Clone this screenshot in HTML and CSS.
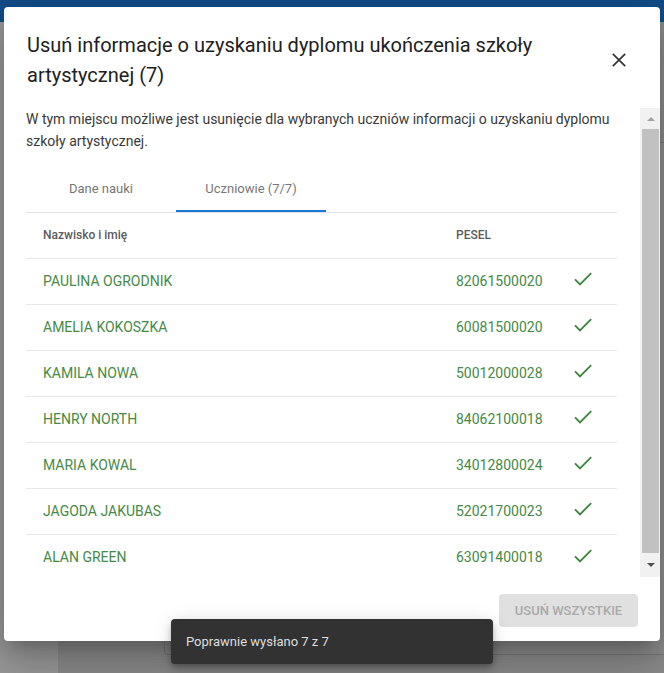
FILE: index.html
```html
<!DOCTYPE html>
<html lang="pl">
<head>
<meta charset="utf-8">
<title>Usuń informacje</title>
<link rel="stylesheet" href="styles.css">
</head>
<body>
<div class="page">
  <div class="topbar"></div>
  <div class="page-main">
    <div class="side"></div>
    <div class="content-bg">
      <div class="bg-card"></div>
    </div>
  </div>
</div>

<div class="dialog">
  <div class="dialog-header">
    <h2 class="dialog-title">Usuń informacje o uzyskaniu dyplomu ukończenia szkoły artystycznej (7)</h2>
    <button class="close-btn" aria-label="Zamknij">
      <svg viewBox="0 0 24 24" width="24" height="24"><path d="M5.8 5.8L18.2 18.2M18.2 5.8L5.8 18.2" stroke="#333" stroke-width="1.7" fill="none"/></svg>
    </button>
  </div>
  <div class="dialog-content">
    <div class="scroll-inner">
      <p class="desc">W tym miejscu możliwe jest usunięcie dla wybranych uczniów informacji o uzyskaniu dyplomu szkoły artystycznej.</p>
      <div class="tabs">
        <div class="tab">Dane nauki</div>
        <div class="tab tab-active">Uczniowie (7/7)</div>
      </div>
      <div class="table">
        <div class="row head">
          <div class="cell">Nazwisko i imię</div>
          <div class="cell">PESEL</div>
          <div class="cell"></div>
        </div>
        <div class="row">
          <div class="cell">PAULINA OGRODNIK</div>
          <div class="cell">82061500020</div>
          <div class="cell"><svg class="check" viewBox="0 0 24 24" width="24" height="24"><polyline points="4,12.3 9,17.3 20.2,6.1" /></svg></div>
        </div>
        <div class="row">
          <div class="cell">AMELIA KOKOSZKA</div>
          <div class="cell">60081500020</div>
          <div class="cell"><svg class="check" viewBox="0 0 24 24" width="24" height="24"><polyline points="4,12.3 9,17.3 20.2,6.1" /></svg></div>
        </div>
        <div class="row">
          <div class="cell">KAMILA NOWA</div>
          <div class="cell">50012000028</div>
          <div class="cell"><svg class="check" viewBox="0 0 24 24" width="24" height="24"><polyline points="4,12.3 9,17.3 20.2,6.1" /></svg></div>
        </div>
        <div class="row">
          <div class="cell">HENRY NORTH</div>
          <div class="cell">84062100018</div>
          <div class="cell"><svg class="check" viewBox="0 0 24 24" width="24" height="24"><polyline points="4,12.3 9,17.3 20.2,6.1" /></svg></div>
        </div>
        <div class="row">
          <div class="cell">MARIA KOWAL</div>
          <div class="cell">34012800024</div>
          <div class="cell"><svg class="check" viewBox="0 0 24 24" width="24" height="24"><polyline points="4,12.3 9,17.3 20.2,6.1" /></svg></div>
        </div>
        <div class="row">
          <div class="cell">JAGODA JAKUBAS</div>
          <div class="cell">52021700023</div>
          <div class="cell"><svg class="check" viewBox="0 0 24 24" width="24" height="24"><polyline points="4,12.3 9,17.3 20.2,6.1" /></svg></div>
        </div>
        <div class="row last">
          <div class="cell">ALAN GREEN</div>
          <div class="cell">63091400018</div>
          <div class="cell"><svg class="check" viewBox="0 0 24 24" width="24" height="24"><polyline points="4,12.3 9,17.3 20.2,6.1" /></svg></div>
        </div>
      </div>
    </div>
    <div class="scrollbar">
      <div class="sb-btn"><span class="arrow-up"></span></div>
      <div class="sb-thumb"></div>
      <div class="sb-btn sb-btn-down"><span class="arrow-down"></span></div>
    </div>
  </div>
  <div class="dialog-footer">
    <button class="btn-disabled" disabled>USUŃ WSZYSTKIE</button>
  </div>
</div>

<div class="snackbar">Poprawnie wysłano 7 z 7</div>
</body>
</html>
```

FILE: styles.css
```css
* { box-sizing: border-box; }

html, body {
  margin: 0;
  padding: 0;
  width: 664px;
  height: 673px;
  overflow: hidden;
  font-family: Roboto, "Liberation Sans", Arial, sans-serif;
}

body { position: relative; background: #8d8d8d; }

.page {
  height: 673px;
  display: flex;
  flex-direction: column;
}

.topbar {
  height: 22px;
  background: #124c89;
  flex: none;
}

.page-main {
  flex: 1;
  display: flex;
}

.side {
  width: 58px;
  background: #9a9a9a;
}

.content-bg {
  flex: 1;
  background: #8c8c8c;
  padding: 120px 0 18px 106px;
  display: flex;
}

.bg-card {
  flex: 1;
  margin-right: -20px;
  background: #8f8f8f;
  border: 1px solid #7a7a7a;
  border-radius: 4px;
}

/* Dialog */
.dialog {
  position: absolute;
  left: 4px;
  top: 7px;
  width: 656px;
  height: 634px;
  background: #fff;
  border-radius: 4px;
  box-shadow: 0 11px 15px -7px rgba(0,0,0,.2), 0 24px 38px 3px rgba(0,0,0,.14), 0 9px 46px 8px rgba(0,0,0,.12);
  display: flex;
  flex-direction: column;
}

.dialog-header {
  display: flex;
  align-items: flex-start;
  padding: 23px 0 0 23px;
  height: 101px;
  flex: none;
}

.dialog-title {
  flex: 1;
  margin: 0;
  font-size: 20px;
  line-height: 30px;
  font-weight: 400;
  color: #212121;
}

.close-btn {
  margin: 18px 29px 0 0;
  padding: 0;
  border: 0;
  background: transparent;
  width: 24px;
  height: 24px;
}
.close-btn svg { display: block; }

.dialog-content {
  height: 469px;
  flex: none;
  display: flex;
}

.scroll-inner {
  flex: 1;
  overflow: hidden;
  padding: 0 23px 0 22px;
}

.desc {
  margin: 0;
  font-size: 14px;
  line-height: 22px;
  color: #3a3a3a;
}

.tabs {
  margin-top: 12px;
  display: flex;
  border-bottom: 1px solid #e2e2e2;
}

.tab {
  width: 150px;
  height: 48px;
  display: flex;
  align-items: center;
  justify-content: center;
  font-size: 13px;
  color: #777;
  border-bottom: 2px solid transparent;
  padding-top: 3px;
}

.tab-active {
  border-bottom-color: #1976d2;
}

.table { display: flex; flex-direction: column; }

.row {
  display: grid;
  grid-template-columns: 414px 115px 1fr;
  height: 46px;
  border-bottom: 1px solid #e8e8e8;
  align-items: center;
  font-size: 14px;
  color: #468a46;
  padding-bottom: 2px;
}

.row.last { border-bottom: 0; }

.row.head {
  font-size: 12px;
  font-weight: 500;
  color: #5c5c5c;
}

.cell {
  padding-left: 17px;
  display: flex;
  align-items: center;
}

.row .cell:nth-child(2) { padding-left: 16px; }
.row .cell:nth-child(3) { padding-left: 16px; }

.check {
  display: block;
  margin-bottom: 3px;
}
.check polyline {
  fill: none;
  stroke: #3d873d;
  stroke-width: 1.9;
}

/* Scrollbar */
.scrollbar {
  width: 20px;
  background: #f1f1f1;
  display: flex;
  flex-direction: column;
  padding: 0 1px 0 2px;
}

.sb-btn {
  height: 21px;
  display: flex;
  align-items: center;
  justify-content: center;
}

.sb-btn-down { height: 24px; }

.arrow-up {
  width: 0; height: 0;
  border-left: 4px solid transparent;
  border-right: 4px solid transparent;
  border-bottom: 4px solid #a3a3a3;
}

.arrow-down {
  width: 0; height: 0;
  border-left: 4px solid transparent;
  border-right: 4px solid transparent;
  border-top: 4px solid #505050;
}

.sb-thumb {
  flex: 1;
  background: #c1c1c1;
}

/* Footer */
.dialog-footer {
  flex: 1;
  display: flex;
  justify-content: flex-end;
  align-items: flex-start;
  padding: 17px 22px 0 0;
}

.btn-disabled {
  width: 139px;
  height: 33px;
  border: 0;
  border-radius: 4px;
  background: #e0e0e0;
  color: #a9a9a9;
  font-family: Roboto, "Liberation Sans", Arial, sans-serif;
  font-size: 13px;
  font-weight: 500;
  padding: 0;
}

/* Snackbar */
.snackbar {
  position: absolute;
  left: 171px;
  top: 619px;
  width: 322px;
  height: 45px;
  background: #323232;
  border-radius: 4px;
  color: #dedede;
  font-size: 13px;
  line-height: 45px;
  padding-left: 15px;
  box-shadow: 0 3px 5px -1px rgba(0,0,0,.2), 0 6px 10px 0 rgba(0,0,0,.14), 0 1px 18px 0 rgba(0,0,0,.12);
}
```
